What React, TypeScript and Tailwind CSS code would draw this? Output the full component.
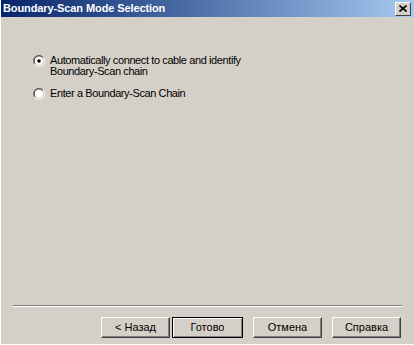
import React from "react";

function Radio({ checked }: { checked?: boolean }) {
  return (
    <svg width="12" height="12" viewBox="0 0 12 12" className="shrink-0">
      <path d="M10.5 2.5 A5 5 0 0 0 1.5 9.5" fill="none" stroke="#808080" strokeWidth="1" />
      <path d="M9.2 2.2 A4 4 0 0 0 2.5 8.6" fill="none" stroke="#404040" strokeWidth="1" />
      <circle cx="6" cy="6" r="4" fill="#ffffff" />
      <path d="M1.5 9.5 A5 5 0 0 0 10.5 2.5" fill="none" stroke="#ffffff" strokeWidth="1" />
      <path d="M2.8 9.2 A4 4 0 0 0 9.5 3.2" fill="none" stroke="#d4d0c8" strokeWidth="1" />
      {checked && <circle cx="6" cy="6" r="1.8" fill="#000000" />}
    </svg>
  );
}

function Btn({ children, def }: { children: React.ReactNode; def?: boolean }) {
  return (
    <div
      className={
        "h-[21px] flex items-center justify-center text-[11px] text-black bg-[#d4d0c8] " +
        (def
          ? "w-[71px] border border-black shadow-[inset_1px_1px_0_#ffffff,inset_-1px_-1px_0_#808080]"
          : "w-[69px] border border-t-white border-l-white border-r-[#404040] border-b-[#404040] shadow-[inset_-1px_-1px_0_#808080]")
      }
    >
      {children}
    </div>
  );
}

export default function App() {
  return (
    <div
      className="w-[414px] h-[345px] bg-[#d4d0c8] flex flex-col border-l border-l-white border-b border-b-white"
      style={{ fontFamily: "'Liberation Sans', Arial, sans-serif" }}
    >
      <div className="h-[17px] shrink-0 flex items-center justify-between bg-gradient-to-r from-[#0a246a] to-[#a6caf0] pl-[2px] pr-[3px]">
        <span className="text-white font-bold text-[11px] tracking-[-0.1px] leading-none">
          Boundary-Scan Mode Selection
        </span>
        <div className="w-[16px] h-[14px] bg-[#d4d0c8] border border-t-white border-l-white border-r-[#404040] border-b-[#404040] flex items-center justify-center">
          <svg width="8" height="7" viewBox="0 0 8 7">
            <path d="M0.5 0.5 L7.5 6.5 M7.5 0.5 L0.5 6.5" stroke="#000" strokeWidth="1.6" />
          </svg>
        </div>
      </div>
      <div className="flex-1 flex flex-col pl-[32px] pt-[38px] text-[11px] text-black leading-[11px] tracking-[-0.4px]">
        <div className="flex items-start gap-[5px]">
          <Radio checked />
          <div className="leading-[11px]">
            <div>Automatically connect to cable and identify</div>
            <div>Boundary-Scan chain</div>
          </div>
        </div>
        <div className="flex items-start gap-[5px] mt-[11px]">
          <Radio />
          <div>Enter a Boundary-Scan Chain</div>
        </div>
      </div>
      <div className="mx-[12px] h-[2px] shrink-0 border-t border-t-[#808080] border-b border-b-white" />
      <div className="h-[37px] shrink-0 flex items-start pt-[10px] pl-[100px]">
        <Btn>&lt; Назад</Btn>
        <div className="ml-[2px]"><Btn def>Готово</Btn></div>
        <div className="ml-[10px]"><Btn>Отмена</Btn></div>
        <div className="ml-[10px]"><Btn>Справка</Btn></div>
      </div>
    </div>
  );
}
